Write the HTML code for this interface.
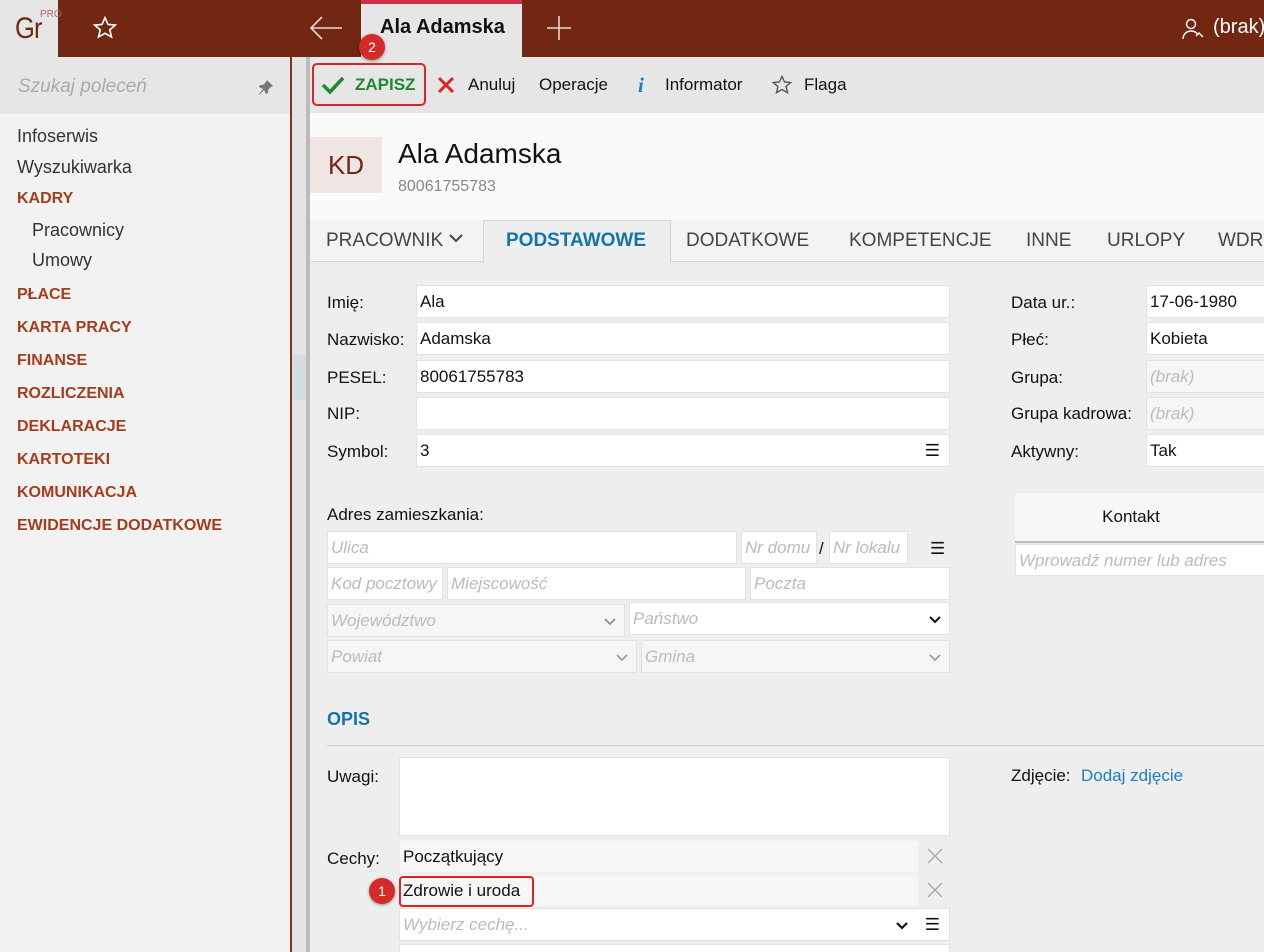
<!DOCTYPE html>
<html style="overflow:hidden"><head><meta charset="utf-8"><style>
*{box-sizing:border-box;margin:0;padding:0}
html,body{width:1264px;height:952px;overflow:hidden}
body{font-family:"Liberation Sans",sans-serif;background:#eee;position:relative;color:#111}
.a{position:absolute}
.top{left:0;top:0;width:1264px;height:57px;background:#722713}
.logo{left:0;top:0;width:58px;height:57px;background:#e6e6e6}
.side{left:0;top:57px;width:291px;height:895px;background:#f2f2f2}
.nav{font-size:18px;color:#333}
.k{font-size:16px;font-weight:bold;color:#a23e1c}
.in{background:#fff;border:1px solid #e2e2e2;height:33px;font-size:17px;padding:6px 3px}
.lbl{font-size:17px;color:#111}
.ph{color:#bbb;font-style:italic}
.gr{background:#f6f6f6}
.tab{font-size:19px;color:#444;top:230px}
.badge{width:26px;height:26px;border-radius:50%;background:#d42a2a;color:#fff;font-size:14px;text-align:center;line-height:26px;box-shadow:0 1px 3px rgba(0,0,0,.4)}
</style></head><body>
<div class="a top"></div>
<div class="a logo"><span class="a" style="left:15px;top:12px;font-size:30px;color:#722713;letter-spacing:-1px;transform:scaleX(.85);transform-origin:left">Gr</span><span class="a" style="left:40px;top:9px;font-size:10px;color:#a07060">PRO</span></div>
<svg class="a" style="left:92px;top:15px" width="26" height="26" viewBox="0 0 24 24"><path d="M12 2.5l2.8 6.2 6.7.6-5.1 4.4 1.6 6.6L12 16.9l-6 3.4 1.6-6.6-5.1-4.4 6.7-.6z" fill="none" stroke="#fff" stroke-width="1.5"/></svg>
<svg class="a" style="left:308px;top:14px" width="36" height="28" viewBox="0 0 36 28"><path d="M34 14H3M14 3L3 14l11 11" fill="none" stroke="#e8d8d0" stroke-width="1.6"/></svg>
<div class="a" style="left:361px;top:0;width:161px;height:57px;background:#e6e6e6;border-top:4px solid #d0304a"></div>
<div class="a" style="left:380px;top:16px;font-size:20px;font-weight:bold;color:#111">Ala Adamska</div>
<svg class="a" style="left:546px;top:15px" width="26" height="26"><path d="M13 1v24M1 13h24" stroke="#e8d8d0" stroke-width="1.6"/></svg>
<svg class="a" style="left:1182px;top:17px" width="24" height="24" viewBox="0 0 24 24"><circle cx="9" cy="7" r="4.5" fill="none" stroke="#fff" stroke-width="1.4"/><path d="M1 22c0-5 4-8 8-8s6 2 7 4M14 19l3-3 4 4" fill="none" stroke="#fff" stroke-width="1.4"/></svg>
<div class="a" style="left:1213px;top:16px;font-size:20px;color:#fff">(brak)</div>

<div class="a side"></div>
<div class="a" style="left:0;top:57px;width:291px;height:57px;background:#e6e6e6"></div>
<div class="a" style="left:18px;top:76px;font-size:19px;color:#aaa;font-style:italic">Szukaj poleceń</div>
<svg class="a" style="left:257px;top:78px" width="18" height="18" viewBox="0 0 18 18"><path d="M10 2l6 6-2 1-3 3 0 3-2 1-2-4-5 5 0-1 4-5-4-2 1-2 3 0 3-3z" fill="#777"/></svg>
<div class="a nav" style="left:17px;top:126px">Infoserwis</div>
<div class="a nav" style="left:17px;top:157px">Wyszukiwarka</div>
<div class="a k" style="left:17px;top:190px">KADRY</div>
<div class="a nav" style="left:32px;top:220px">Pracownicy</div>
<div class="a nav" style="left:32px;top:250px">Umowy</div>
<div class="a k" style="left:17px;top:286px">PŁACE</div>
<div class="a k" style="left:17px;top:319px">KARTA PRACY</div>
<div class="a k" style="left:17px;top:352px">FINANSE</div>
<div class="a k" style="left:17px;top:385px">ROZLICZENIA</div>
<div class="a k" style="left:17px;top:418px">DEKLARACJE</div>
<div class="a k" style="left:17px;top:451px">KARTOTEKI</div>
<div class="a k" style="left:17px;top:484px">KOMUNIKACJA</div>
<div class="a k" style="left:17px;top:517px">EWIDENCJE DODATKOWE</div>

<div class="a" style="left:290px;top:57px;width:2px;height:895px;background:#7a3a22"></div>
<div class="a" style="left:292px;top:57px;width:16px;height:895px;background:#e4e4e4"></div>
<div class="a" style="left:292px;top:355px;width:16px;height:45px;background:#d6dde2"></div>
<div class="a" style="left:306px;top:57px;width:4px;height:895px;background:#bbb"></div>

<div class="a" style="left:310px;top:57px;width:954px;height:56px;background:#e6e6e6"></div>
<div class="a" style="left:312px;top:63px;width:114px;height:43px;border:2px solid #e02424;border-radius:5px"></div>
<svg class="a" style="left:321px;top:75px" width="24" height="20" viewBox="0 0 24 20"><path d="M2 10l7 7L22 3" fill="none" stroke="#1f8a2a" stroke-width="3.5"/></svg>
<div class="a" style="left:355px;top:75px;font-size:17px;font-weight:bold;color:#1f8a2a">ZAPISZ</div>
<div class="a badge" style="left:359px;top:34px">2</div>
<svg class="a" style="left:437px;top:76px" width="18" height="18"><path d="M2 2l14 14M16 2L2 16" stroke="#e02424" stroke-width="3"/></svg>
<div class="a lbl" style="left:468px;top:75px">Anuluj</div>
<div class="a lbl" style="left:539px;top:75px">Operacje</div>
<div class="a" style="left:638px;top:73px;font-size:21px;font-style:italic;font-weight:bold;color:#1a7fc4;font-family:'Liberation Serif',serif">i</div>
<div class="a lbl" style="left:665px;top:75px">Informator</div>
<svg class="a" style="left:771px;top:74px" width="22" height="22" viewBox="0 0 24 24"><path d="M12 2.5l2.8 6.2 6.7.6-5.1 4.4 1.6 6.6L12 16.9l-6 3.4 1.6-6.6-5.1-4.4 6.7-.6z" fill="none" stroke="#555" stroke-width="1.5"/></svg>
<div class="a lbl" style="left:804px;top:75px">Flaga</div>

<div class="a" style="left:310px;top:113px;width:954px;height:107px;background:#fafafa"></div>
<div class="a" style="left:310px;top:137px;width:72px;height:56px;background:#efe5e3;color:#722713;font-size:26px;text-align:center;line-height:56px">KD</div>
<div class="a" style="left:398px;top:138px;font-size:28px;color:#111">Ala Adamska</div>
<div class="a" style="left:398px;top:178px;font-size:16px;color:#888">80061755783</div>

<div class="a" style="left:310px;top:220px;width:954px;height:42px;background:#f3f3f3;border-bottom:1px solid #d6d6d6"></div>
<div class="a" style="left:483px;top:220px;width:188px;height:43px;background:#eee;border:1px solid #d6d6d6;border-bottom:none"></div>
<div class="a tab" style="left:326px">PRACOWNIK <svg width="16" height="12" style="vertical-align:2px"><path d="M2 3l6 6 6-6" fill="none" stroke="#444" stroke-width="2"/></svg></div>
<div class="a tab" style="left:506px;font-weight:bold;color:#1175a8">PODSTAWOWE</div>
<div class="a tab" style="left:686px">DODATKOWE</div>
<div class="a tab" style="left:849px">KOMPETENCJE</div>
<div class="a tab" style="left:1026px">INNE</div>
<div class="a tab" style="left:1107px">URLOPY</div>
<div class="a tab" style="left:1218px">WDR</div>

<div class="a lbl" style="left:327px;top:293px">Imię:</div><div class="a in" style="left:416px;top:285px;width:534px">Ala</div>
<div class="a lbl" style="left:327px;top:330px">Nazwisko:</div><div class="a in" style="left:416px;top:322px;width:534px">Adamska</div>
<div class="a lbl" style="left:327px;top:368px">PESEL:</div><div class="a in" style="left:416px;top:360px;width:534px">80061755783</div>
<div class="a lbl" style="left:327px;top:404px">NIP:</div><div class="a in" style="left:416px;top:397px;width:534px"></div>
<div class="a lbl" style="left:327px;top:442px">Symbol:</div><div class="a in" style="left:416px;top:434px;width:534px">3<span style="float:right;margin-right:6px">☰</span></div>

<div class="a lbl" style="left:1011px;top:293px">Data ur.:</div><div class="a in" style="left:1146px;top:285px;width:130px">17-06-1980</div>
<div class="a lbl" style="left:1011px;top:330px">Płeć:</div><div class="a in" style="left:1146px;top:322px;width:130px">Kobieta</div>
<div class="a lbl" style="left:1011px;top:368px">Grupa:</div><div class="a in gr" style="left:1146px;top:360px;width:130px"><span class="ph">(brak)</span></div>
<div class="a lbl" style="left:1011px;top:404px">Grupa kadrowa:</div><div class="a in gr" style="left:1146px;top:397px;width:130px"><span class="ph">(brak)</span></div>
<div class="a lbl" style="left:1011px;top:442px">Aktywny:</div><div class="a in" style="left:1146px;top:434px;width:130px">Tak</div>

<div class="a" style="left:1015px;top:493px;width:260px;height:50px;background:#f7f7f7;border-bottom:2px solid #bbb;font-size:17px;text-align:center;line-height:48px"><span style="margin-left:-28px">Kontakt</span></div>
<div class="a in" style="left:1015px;top:544px;width:260px;height:32px"><span class="ph">Wprowadź numer lub adres</span></div>

<div class="a lbl" style="left:327px;top:505px">Adres zamieszkania:</div>
<div class="a in" style="left:327px;top:531px;width:410px"><span class="ph">Ulica</span></div>
<div class="a in" style="left:741px;top:531px;width:76px"><span class="ph">Nr domu</span></div>
<div class="a lbl" style="left:819px;top:539px">/</div>
<div class="a in" style="left:829px;top:531px;width:79px"><span class="ph">Nr lokalu</span></div>
<div class="a lbl" style="left:930px;top:539px">☰</div>
<div class="a in" style="left:327px;top:567px;width:116px"><span class="ph">Kod pocztowy</span></div>
<div class="a in" style="left:447px;top:567px;width:299px"><span class="ph">Miejscowość</span></div>
<div class="a in" style="left:750px;top:567px;width:200px"><span class="ph">Poczta</span></div>
<div class="a in gr" style="left:327px;top:604px;width:298px"><span class="ph">Województwo</span><svg style="float:right;margin:6px 4px 0 0" width="14" height="10"><path d="M2 2l5 5 5-5" fill="none" stroke="#888" stroke-width="1.6"/></svg></div>
<div class="a in" style="left:629px;top:602px;width:321px"><span class="ph">Państwo</span><svg style="float:right;margin:6px 4px 0 0" width="14" height="10"><path d="M2 2l5 5 5-5" fill="none" stroke="#111" stroke-width="2"/></svg></div>
<div class="a in gr" style="left:327px;top:640px;width:310px"><span class="ph">Powiat</span><svg style="float:right;margin:6px 4px 0 0" width="14" height="10"><path d="M2 2l5 5 5-5" fill="none" stroke="#999" stroke-width="1.6"/></svg></div>
<div class="a in gr" style="left:641px;top:640px;width:309px"><span class="ph">Gmina</span><svg style="float:right;margin:6px 4px 0 0" width="14" height="10"><path d="M2 2l5 5 5-5" fill="none" stroke="#999" stroke-width="1.6"/></svg></div>

<div class="a" style="left:327px;top:709px;font-size:18px;font-weight:bold;color:#1175a8">OPIS</div>
<div class="a" style="left:327px;top:745px;width:937px;height:1px;background:#ccc"></div>
<div class="a lbl" style="left:327px;top:767px">Uwagi:</div>
<div class="a in" style="left:399px;top:757px;width:551px;height:79px"></div>
<div class="a lbl" style="left:1011px;top:766px">Zdjęcie:</div>
<div class="a" style="left:1081px;top:766px;font-size:17px;color:#1a7fc4">Dodaj zdjęcie</div>

<div class="a lbl" style="left:327px;top:849px">Cechy:</div>
<div class="a in gr" style="left:399px;top:840px;width:520px;border-color:#f0f0f0">Początkujący</div>
<svg class="a" style="left:926px;top:847px" width="18" height="18"><path d="M2 2l14 14M16 2L2 16" stroke="#aaa" stroke-width="1.4"/></svg>
<div class="a in gr" style="left:399px;top:874px;width:520px;border-color:#f0f0f0">Zdrowie i uroda</div>
<div class="a" style="left:399px;top:876px;width:135px;height:31px;border:2px solid #e02424;border-radius:4px"></div>
<div class="a badge" style="left:369px;top:878px">1</div>
<svg class="a" style="left:926px;top:881px" width="18" height="18"><path d="M2 2l14 14M16 2L2 16" stroke="#aaa" stroke-width="1.4"/></svg>
<div class="a in" style="left:399px;top:908px;width:551px"><span class="ph">Wybierz cechę...</span><span style="float:right;margin-right:6px">☰</span><svg style="float:right;margin:6px 16px 0 0" width="14" height="10"><path d="M2 2l5 5 5-5" fill="none" stroke="#111" stroke-width="2.2"/></svg></div>
<div class="a in" style="left:399px;top:944px;width:551px;height:8px;border-bottom:none"></div>
</body></html>
